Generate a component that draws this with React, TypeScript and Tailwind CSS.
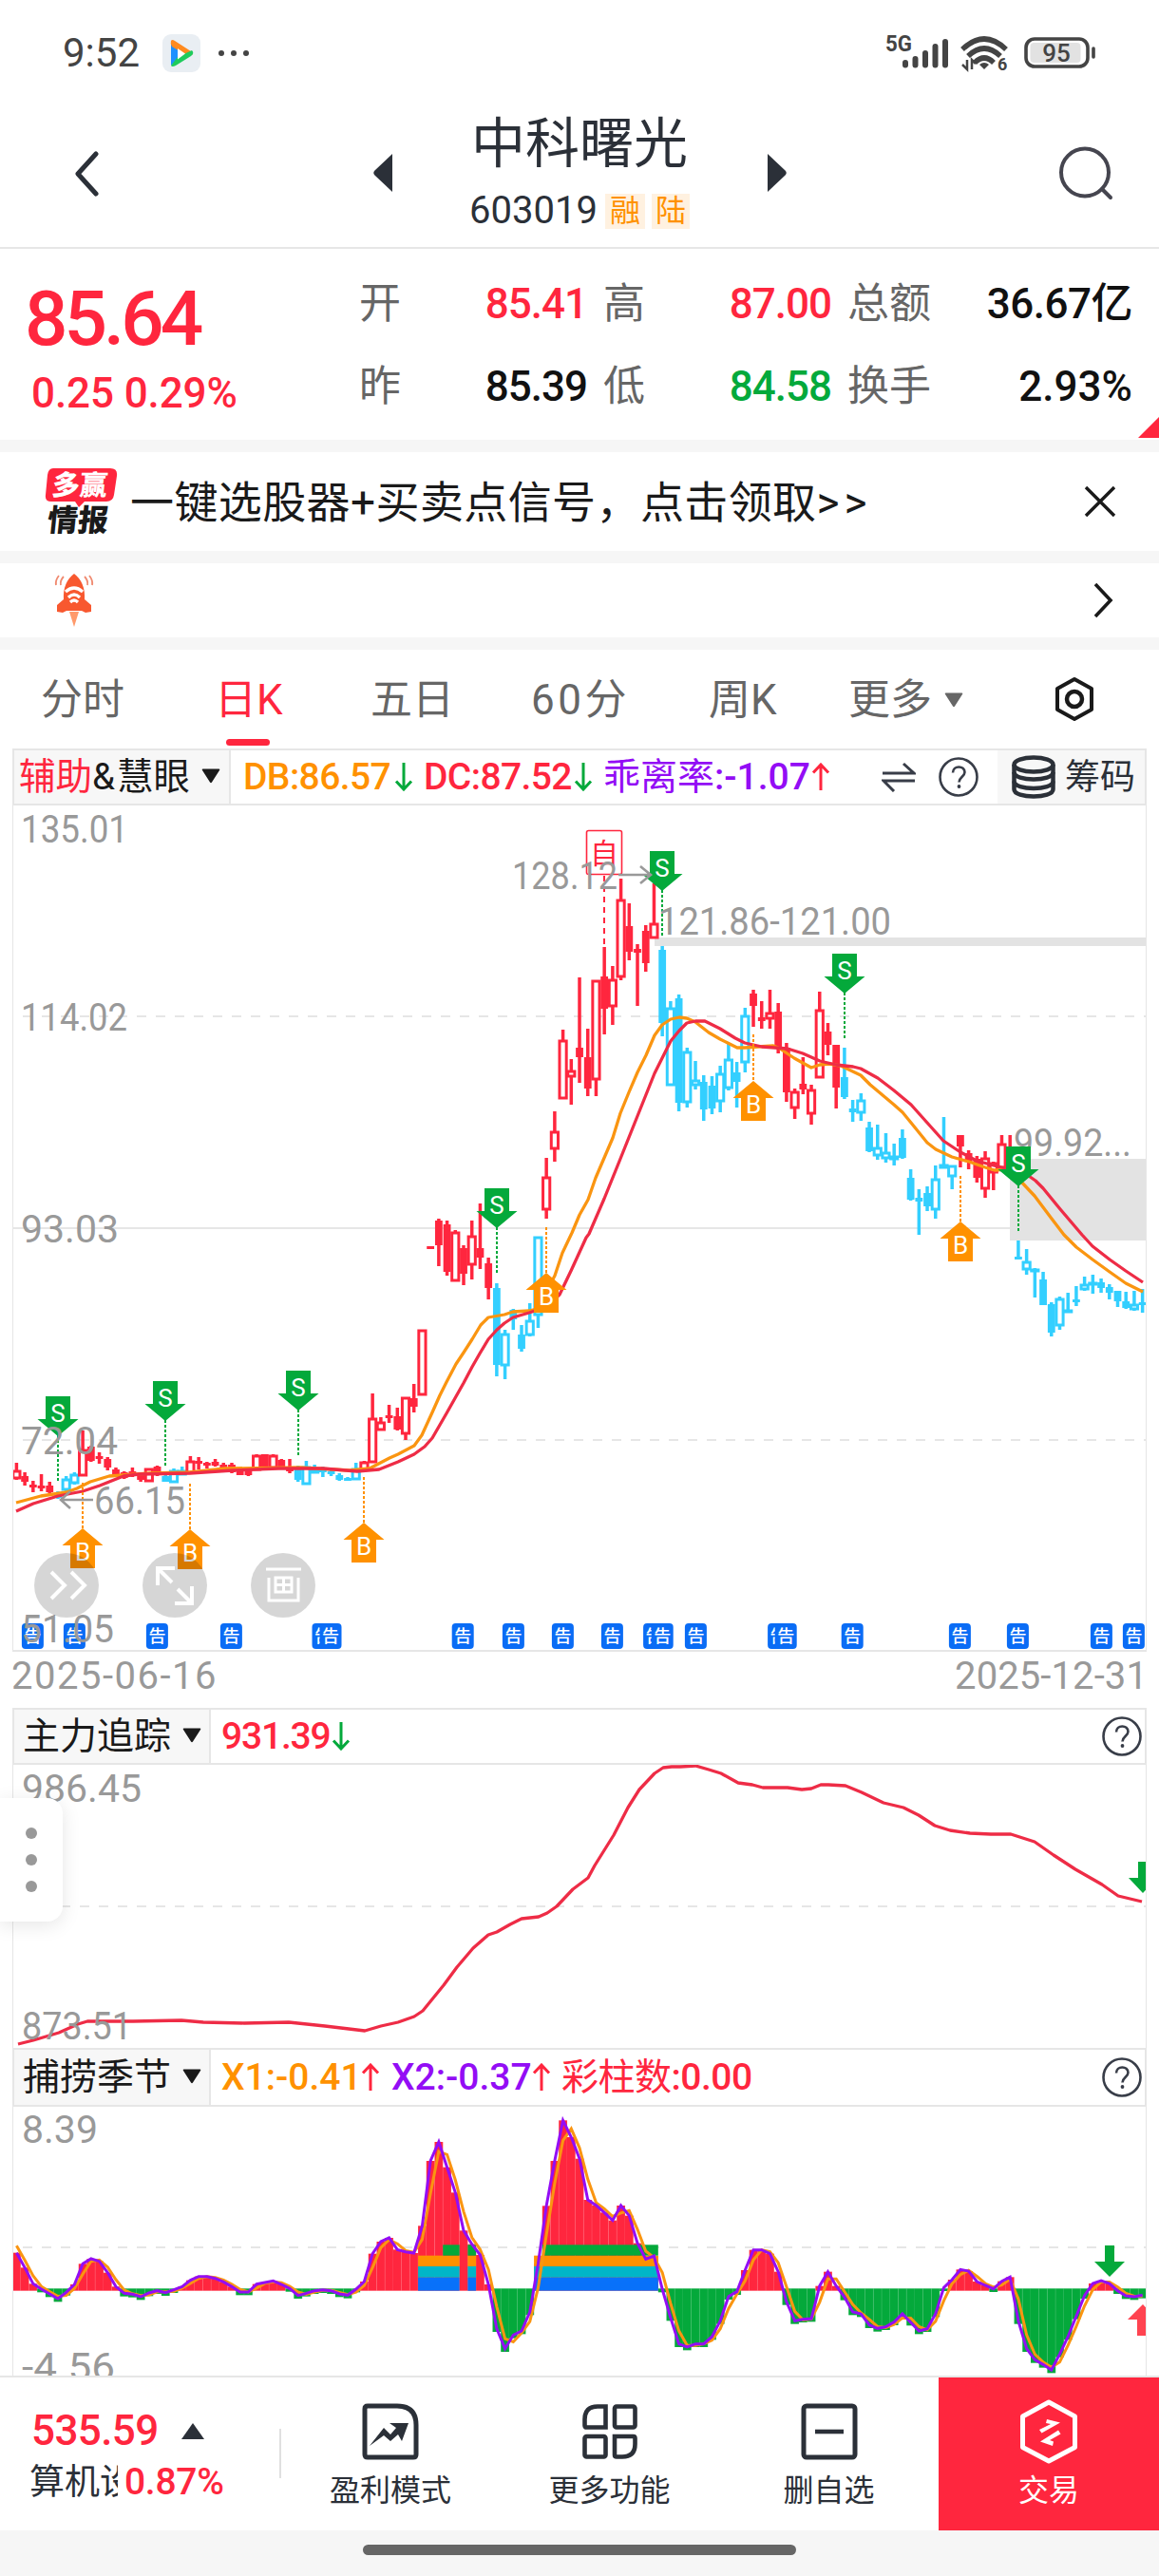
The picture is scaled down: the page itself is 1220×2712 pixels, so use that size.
import type { ReactNode } from "react";

type Kind = "R" | "r" | "B" | "b";
type Candle = [Kind, number, number, number, number];

const RED = "#ff263e";
const GREEN = "#04a93b";
const ORANGE = "#ff9100";
const CYAN = "#33cfff";
const PURPLE = "#930df5";

const STEP = 8.715;
const X0 = 17.4;
const cx = (i: number) => X0 + i * STEP;

// kind, high, body top, body bottom, low (upper case kinds are hollow)
const candles: Candle[] = [
  ["R", 1540, 1549, 1556, 1558], ["r", 1550, 1554, 1560, 1564], ["r", 1559, 1563, 1566, 1571], ["r", 1552, 1564, 1566, 1570],
  ["r", 1560, 1564, 1571, 1572], ["b", 1570, 1572, 1577, 1578], ["B", 1554, 1558, 1568, 1570], ["B", 1550, 1553, 1561, 1563],
  ["R", 1506, 1527, 1553, 1554], ["r", 1522, 1523, 1538, 1539], ["r", 1529, 1533, 1535, 1541], ["r", 1534, 1536, 1545, 1548],
  ["r", 1545, 1547, 1554, 1555], ["r", 1549, 1550, 1556, 1557], ["r", 1545, 1549, 1554, 1555], ["r", 1550, 1551, 1558, 1560],
  ["R", 1546, 1547, 1559, 1560], ["r", 1543, 1544, 1553, 1554], ["b", 1553, 1554, 1560, 1560], ["B", 1546, 1549, 1560, 1561],
  ["B", 1544, 1549, 1552, 1553], ["R", 1533, 1539, 1550, 1552], ["r", 1534, 1538, 1541, 1547], ["r", 1539, 1540, 1542, 1546],
  ["r", 1536, 1539, 1543, 1544], ["r", 1540, 1542, 1545, 1546], ["r", 1540, 1542, 1550, 1551], ["r", 1545, 1546, 1553, 1553],
  ["r", 1546, 1547, 1553, 1554], ["R", 1531, 1533, 1547, 1548], ["r", 1531, 1531, 1545, 1546], ["R", 1531, 1533, 1545, 1546],
  ["r", 1536, 1537, 1545, 1546], ["r", 1536, 1546, 1549, 1551], ["b", 1543, 1544, 1558, 1560], ["B", 1538, 1545, 1562, 1563],
  ["B", 1542, 1547, 1550, 1551], ["b", 1544, 1547, 1550, 1555], ["b", 1548, 1549, 1552, 1554], ["b", 1551, 1553, 1558, 1559],
  ["b", 1555, 1556, 1558, 1559], ["B", 1540, 1547, 1557, 1558], ["R", 1538, 1540, 1547, 1548], ["R", 1467, 1494, 1539, 1540],
  ["R", 1492, 1498, 1505, 1506], ["r", 1479, 1490, 1493, 1498], ["r", 1482, 1491, 1505, 1506], ["R", 1471, 1472, 1509, 1516],
  ["r", 1457, 1472, 1481, 1487], ["R", 1400, 1401, 1468, 1468], ["r", 1312, 1312, 1315, 1315], ["r", 1283, 1285, 1311, 1333],
  ["r", 1285, 1289, 1339, 1343], ["R", 1295, 1298, 1348, 1349], ["r", 1311, 1314, 1341, 1353], ["R", 1285, 1302, 1331, 1347],
  ["r", 1267, 1314, 1324, 1336], ["r", 1324, 1330, 1356, 1368], ["b", 1351, 1356, 1437, 1449], ["B", 1400, 1405, 1437, 1452],
  ["b", 1378, 1379, 1389, 1400], ["b", 1395, 1405, 1420, 1423], ["B", 1372, 1391, 1405, 1407], ["B", 1302, 1303, 1384, 1398],
  ["R", 1219, 1240, 1273, 1283], ["R", 1170, 1192, 1209, 1223], ["R", 1084, 1096, 1156, 1157], ["R", 1115, 1128, 1133, 1163],
  ["r", 1029, 1103, 1113, 1140], ["r", 1083, 1113, 1146, 1154], ["R", 1032, 1033, 1136, 1154], ["r", 997, 1028, 1062, 1089],
  ["R", 1017, 1032, 1059, 1079], ["R", 925, 948, 1028, 1032], ["r", 951, 975, 1002, 1011], ["r", 994, 999, 1003, 1059],
  ["r", 974, 980, 1014, 1023], ["R", 930, 973, 987, 988], ["b", 996, 1000, 1077, 1091], ["B", 1054, 1062, 1142, 1143],
  ["b", 1047, 1051, 1161, 1170], ["B", 1103, 1108, 1160, 1166], ["B", 1117, 1138, 1142, 1147], ["b", 1132, 1139, 1168, 1180],
  ["b", 1133, 1143, 1167, 1173], ["B", 1122, 1131, 1159, 1171], ["B", 1098, 1116, 1145, 1148], ["b", 1118, 1129, 1139, 1166],
  ["B", 1061, 1070, 1118, 1129], ["r", 1042, 1046, 1059, 1081], ["r", 1054, 1071, 1075, 1083], ["R", 1042, 1067, 1072, 1083],
  ["r", 1056, 1065, 1103, 1109], ["r", 1098, 1103, 1150, 1160], ["R", 1146, 1150, 1166, 1178], ["r", 1113, 1141, 1147, 1152],
  ["R", 1142, 1148, 1172, 1184], ["R", 1044, 1064, 1134, 1135], ["r", 1077, 1086, 1100, 1111], ["r", 1100, 1100, 1145, 1167],
  ["b", 1103, 1134, 1155, 1157], ["b", 1158, 1167, 1171, 1181], ["B", 1151, 1159, 1171, 1180], ["b", 1181, 1187, 1212, 1213],
  ["B", 1184, 1209, 1216, 1221], ["B", 1193, 1214, 1219, 1224], ["B", 1204, 1218, 1220, 1227], ["b", 1189, 1198, 1219, 1220],
  ["b", 1231, 1240, 1263, 1264], ["b", 1252, 1261, 1265, 1300], ["b", 1249, 1256, 1270, 1275], ["B", 1227, 1242, 1273, 1283],
  ["B", 1176, 1227, 1229, 1230], ["B", 1227, 1228, 1238, 1252], ["r", 1195, 1195, 1207, 1229], ["r", 1211, 1214, 1223, 1231],
  ["r", 1217, 1220, 1240, 1245], ["R", 1212, 1220, 1251, 1261], ["R", 1223, 1225, 1234, 1253], ["R", 1195, 1205, 1229, 1230],
  ["r", 1195, 1210, 1228, 1230], ["b", 1306, 1323, 1325, 1325], ["B", 1315, 1329, 1336, 1342], ["B", 1335, 1337, 1338, 1366],
  ["b", 1339, 1347, 1374, 1374], ["b", 1371, 1373, 1403, 1407], ["B", 1365, 1368, 1395, 1400], ["B", 1361, 1380, 1381, 1382],
  ["b", 1354, 1368, 1370, 1375], ["B", 1344, 1353, 1357, 1359], ["B", 1342, 1351, 1352, 1362], ["b", 1346, 1350, 1356, 1361],
  ["b", 1352, 1355, 1361, 1368], ["b", 1359, 1359, 1370, 1376], ["b", 1360, 1370, 1377, 1378], ["B", 1359, 1374, 1378, 1380],
  ["b", 1357, 1371, 1374, 1382],
];

const dbLine =
  "17,1582 43,1575 70,1571 81,1567 95,1560 115,1554 158,1551 200,1550 237,1546 316,1545 368,1548 389,1546 410,1535 419,1531 436,1522 444,1511 455,1487 463,1469 470,1455 480,1436 488,1424 497,1410 506,1395 514,1387 531,1384 540,1381 557,1380 565,1378 575,1360 584,1343 592,1319 602,1298 610,1279 619,1263 627,1240 636,1219 645,1198 653,1172 662,1150 671,1129 680,1111 689,1090 697,1079 706,1073 715,1071 723,1072 732,1076 746,1087 758,1094 766,1098 776,1103 784,1103 798,1102 814,1101 821,1104 836,1114 854,1124 863,1121 873,1120 885,1122 906,1132 916,1142 941,1163 950,1171 959,1182 976,1203 985,1210 1002,1218 1020,1223 1037,1229 1047,1232 1059,1231 1072,1241 1089,1259 1107,1283 1120,1300 1133,1313 1150,1326 1168,1339 1185,1351 1203,1360";

const dcLine =
  "17,1591 35,1583 61,1575 87,1570 105,1564 130,1554 146,1552 200,1551 245,1548 293,1546 340,1546 376,1549 399,1547 419,1539 436,1531 447,1523 455,1514 470,1488 488,1456 497,1439 505,1425 514,1410 523,1400 531,1393 540,1387 557,1382 563,1380 577,1374 589,1363 601,1338 617,1303 620,1299 636,1262 653,1220 671,1175 689,1130 706,1096 715,1085 723,1077 732,1075 742,1075 758,1083 774,1093 784,1098 802,1102 829,1104 845,1109 863,1117 880,1121 898,1123 906,1125 924,1135 941,1148 959,1163 976,1182 993,1201 1011,1213 1028,1222 1046,1227 1063,1231 1080,1236 1090,1243 1098,1251 1116,1273 1139,1300 1150,1312 1168,1326 1185,1338 1203,1350";

const forceLine =
  "19,2152 35,2148 62,2140 82,2131 92,2128 140,2128 191,2127 214,2129 257,2130 304,2129 342,2133 384,2138 401,2133 419,2129 436,2123 445,2117 467,2090 481,2071 498,2051 514,2037 523,2034 537,2026 549,2020 567,2018 576,2014 586,2007 603,1989 619,1977 626,1964 646,1932 661,1903 673,1884 689,1867 698,1861 707,1860 716,1860 732,1859 746,1863 759,1867 777,1877 792,1879 803,1882 829,1882 844,1884 854,1883 864,1879 872,1879 890,1880 907,1887 930,1898 951,1903 967,1911 984,1922 1000,1927 1021,1930 1043,1931 1064,1931 1089,1939 1109,1953 1132,1968 1160,1984 1177,1996 1202,2002";

// X2 levels, in thirds of a pixel
const x2 = [
  665, 712, 763, 780, 795, 810, 790, 765, 700, 684, 692, 728, 772, 793, 796, 804, 792, 785, 791, 782, 772, 752, 740, 740, 746,
  757, 772, 789, 789, 764, 759, 754, 765, 778, 800, 793, 785, 782, 785, 795, 799, 780, 756, 668, 630, 618, 655, 662, 666, 580,
  375, 315, 395, 475, 595, 638, 672, 765, 905, 968, 925, 912, 852, 700, 517, 375, 247, 300, 368, 498, 515, 538, 563, 516, 548,
  635, 685, 675, 780, 870, 953, 963, 953, 953, 930, 880, 803, 788, 720, 656, 656, 668, 725, 820, 880, 875, 873, 770, 725, 770,
  805, 852, 858, 893, 904, 899, 884, 858, 885, 912, 905, 858, 775, 750, 718, 723, 756, 768, 779, 755, 742, 880, 968, 1003, 1018,
  1035, 985, 930, 865, 800, 762, 753, 762, 785, 801, 804, 799,
];
const level = (v: number) => 2150 + v / 3;
const x2Points = x2.map((v, i) => `${cx(i)},${level(v)}`).join(" ");
const x1Points = x2.map((v, i) => `${cx(i)},${level(i === 0 ? 643 : (v + x2[i - 1]) / 2)}`).join(" ");

// colour columns: first index, last index, top, bottom, fill
const stacks: [number, number, number, number, string][] = [
  [49, 53, 743, 785, "#0871fa"], [49, 53, 708, 743, "#00b6c8"], [49, 53, 674, 708, ORANGE], [52, 53, 640, 674, GREEN],
  [55, 55, 743, 785, "#0871fa"], [55, 55, 708, 743, "#00b6c8"], [55, 55, 674, 708, ORANGE], [55, 55, 640, 674, GREEN],
  [63, 77, 743, 785, "#0871fa"], [63, 77, 708, 743, "#00b6c8"], [63, 77, 674, 708, ORANGE], [64, 77, 640, 674, GREEN],
];

// x, arrow top, end of dotted line
const sells = [[61, 1470, 1560], [174, 1454, 1544], [314, 1443, 1533], [523, 1251, 1341], [697, 896, 986], [889, 1004, 1094], [1072, 1207, 1297]];
// x, arrow tip, start of dotted line
const buys = [[87, 1609, 1561], [200, 1610, 1562], [383, 1603, 1555], [575, 1340, 1292], [793, 1138, 1089], [1011, 1286, 1238]];
const notices = [34.4, 78.4, 165.4, 243.4, 340, 348, 487.2, 540.4, 592.4, 644.4, 688.6, 697.2, 732.4, 819.6, 827.2, 897.2, 1010.4, 1071.4, 1159.4, 1193.4];

function Label({ x, y, w, children, size = 40 }: { x: number; y: number; w: number; children: string; size?: number }) {
  return (
    <text x={x} y={y} fontSize={size} fill="#999" textLength={w} lengthAdjust="spacingAndGlyphs">
      {children}
    </text>
  );
}

function CandleShape({ i, c }: { i: number; c: Candle }) {
  const [kind, high, top, bottom, low] = c;
  const x = cx(i);
  const hollow = kind === "R" || kind === "B";
  const color = kind.toUpperCase() === "R" ? RED : CYAN;
  return (
    <g>
      <path d={`M${x} ${high}V${top}M${x} ${bottom}V${low}`} stroke={color} strokeWidth={3.5} />
      {hollow ? (
        <rect x={x - 3.6} y={top} width={7.2} height={Math.max(1, bottom - top)} fill="#fff" stroke={color} strokeWidth={3} />
      ) : (
        <rect x={x - 3.9} y={top} width={7.8} height={Math.max(3, bottom - top)} fill={color} />
      )}
    </g>
  );
}

function PriceChart() {
  return (
    <svg viewBox="14 848 1192 890" className="block h-[890px] w-[1192px]">
      <path d="M14 1070H1206M14 1516H1206" stroke="#e6e6e6" strokeWidth={2} strokeDasharray="10 10" strokeDashoffset={-10} />
      <path d="M14 1293H1206" stroke="#e6e6e6" strokeWidth={2} />
      <rect x={689} y={987} width={517} height={9} fill="#e3e3e3" />
      <rect x={1063} y={1220} width={143} height={86} fill="#e3e3e3" />
      {candles.map((c, i) => <CandleShape key={i} i={i} c={c} />)}
      <polyline points={dbLine} fill="none" stroke="#fa9511" strokeWidth={3.3} strokeLinejoin="round" />
      <polyline points={dcLine} fill="none" stroke="#ee2c46" strokeWidth={3.3} strokeLinejoin="round" />
      <rect x={617.5} y={874.5} width={37} height={46} rx={2} fill="#fff" stroke={RED} strokeWidth={1.6} />
      <text x={636} y={909} fontSize={30} fill={RED} textAnchor="middle">自</text>
      <path d="M636 922V997" stroke={RED} strokeWidth={2} strokeDasharray="6 5" />
      <Label x={1067} y={1217} w={124}>99.92...</Label>
      {sells.map(([x, y, end]) => (
        <g key={x}>
          <path d={`M${x} ${y + 41}V${end}`} stroke={GREEN} strokeWidth={2} strokeDasharray="3 2" />
          <path d={`M${x - 13} ${y}h26v24h8.5L${x} ${y + 42}L${x - 21.5} ${y + 24}h8.5z`} fill={GREEN} />
          <text x={x} y={y + 27} fontSize={26} fill="#fff" textAnchor="middle">S</text>
        </g>
      ))}
      {buys.map(([x, y, start]) => (
        <g key={x}>
          <path d={`M${x} ${start}V${y + 2}`} stroke={ORANGE} strokeWidth={2} strokeDasharray="3 2" />
          <path d={`M${x - 13} ${y + 42}h26v-24h8.5L${x} ${y}L${x - 21.5} ${y + 18}h8.5z`} fill={ORANGE} />
          <text x={x} y={y + 34} fontSize={26} fill="#fff" textAnchor="middle">B</text>
        </g>
      ))}
      {notices.map((x) => (
        <g key={x}>
          <rect x={x - 11.5} y={1709} width={23} height={27} rx={4} fill="#0a6cf5" />
          <text x={x} y={1729} fontSize={18} fontWeight={500} fill="#fff" textAnchor="middle">告</text>
        </g>
      ))}
      <Label x={22} y={887} w={113}>135.01</Label>
      <Label x={22} y={1085} w={112}>114.02</Label>
      <Label x={22} y={1308} w={103}>93.03</Label>
      <Label x={22} y={1531} w={102}>72.04</Label>
      <Label x={22} y={1729} w={98}>51.05</Label>
      <Label x={539} y={936} w={111}>128.12</Label>
      <Label x={693} y={984} w={245}>121.86-121.00</Label>
      <Label x={99} y={1594} w={96}>66.15</Label>
      <path d="M651 921H684M674 912L685 921L674 930" fill="none" stroke="#999" strokeWidth={2.6} />
      <path d="M98 1579H65M74 1570L64 1579L74 1588" fill="none" stroke="#999" strokeWidth={2.6} />
      {[70, 184, 298].map((x) => <circle key={x} cx={x} cy={1669} r={34} fill="#000" fillOpacity={0.16} />)}
      <g fill="none" stroke="#fff" strokeWidth={4}>
        <path d="M54 1655L68 1669L54 1683M75 1655L89 1669L75 1683" />
        <path d="M184 1651H166V1669M166 1651L181 1666M184 1688H202V1670M202 1688L187 1673" />
        <path d="M280 1652H317M283 1661V1685H314V1661M290 1661H307V1676H290ZM298.500 1661V1676M290 1668.500H307" strokeWidth={3} />
      </g>
    </svg>
  );
}

function ForceChart() {
  return (
    <svg viewBox="14 1858 1192 298" className="block h-[298px] w-[1192px]">
      <path d="M14 2007H1206" stroke="#e6e6e6" strokeWidth={2} strokeDasharray="10 10" strokeDashoffset={-10} />
      <polyline points={forceLine} fill="none" stroke="#ee2c46" strokeWidth={3.3} strokeLinejoin="round" />
      <Label x={23} y={1897} w={126}>986.45</Label>
      <Label x={23} y={2147} w={116}>873.51</Label>
      <path d="M1198 1960h10v17h10l-15 16l-15-16h10z" fill={GREEN} />
    </svg>
  );
}

function SeasonChart() {
  return (
    <svg viewBox="14 2218 1192 283" className="block h-[283px] w-[1192px]">
      <path d="M14 2366H1206" stroke="#e6e6e6" strokeWidth={2} strokeDasharray="10 10" strokeDashoffset={-10} />
      {x2.map((v, i) => {
        const up = v < 774;
        const top = up ? level(v) : level(778);
        const bottom = up ? level(785) : level(Math.max(786, v + 10));
        return (
          <g key={i}>
            <rect x={cx(i) - 4.36} y={top} width={8.8} height={bottom - top} fill={up ? RED : GREEN} />
            <path d={`M${cx(i) + 4.36} ${top}V${bottom}`} stroke="#fff" strokeOpacity={0.2} strokeWidth={0.8} />
          </g>
        );
      })}
      {stacks.map(([from, to, top, bottom, fill], k) => (
        <rect key={k} x={cx(from) - 4.36} y={level(top)} width={(to - from + 1) * STEP} height={(bottom - top) / 3} fill={fill} />
      ))}
      <polyline points={x1Points} fill="none" stroke="#fa9511" strokeWidth={3} />
      <polyline points={x2Points} fill="none" stroke={PURPLE} strokeWidth={3} />
      <Label x={23} y={2256} w={80}>8.39</Label>
      <Label x={23} y={2506} w={98}>-4.56</Label>
      <path d="M1163 2364h10v17h11l-16 16l-16-16h11z" fill={GREEN} />
      <path d="M1197 2459h12v-17h9l-15-16l-16 16h10z" fill="#ff4350" />
    </svg>
  );
}

function Help() {
  return (
    <svg viewBox="0 0 44 44" className="h-[44px] w-[44px] shrink-0">
      <circle cx={22} cy={22} r={19.5} fill="none" stroke="#383d48" strokeWidth={2.6} />
      <path d="M16 17.500C16 9.500 28.500 9.500 28.500 17C28.500 21.500 22.500 22 22.500 27.500" fill="none" stroke="#383d48" strokeWidth={2.6} />
      <circle cx={22.5} cy={32} r={1.9} fill="#383d48" />
    </svg>
  );
}

function Arrow({ up, className = "" }: { up?: boolean; className?: string }) {
  return (
    <svg viewBox="0 0 20 30" className={`h-[30px] w-[20px] shrink-0 ${className}`}>
      <path
        d={up ? "M10 29V2M2 10.500L10 2L18 10.500" : "M10 0V27M2 19.500L10 28L18 19.500"}
        fill="none"
        stroke={up ? RED : GREEN}
        strokeWidth={3}
      />
    </svg>
  );
}

function Caret({ className = "" }: { className?: string }) {
  return (
    <svg viewBox="0 0 20 16" className={`h-[16px] w-[20px] shrink-0 ${className}`}>
      <path d="M1.500 0.500H18.500Q20 0.500 19 2L11 14.500Q10 16 9 14.500L1 2Q0 0.500 1.500 0.500Z" fill="currentColor" />
    </svg>
  );
}

function PanelTitle({ title }: { title: string }) {
  return (
    <div className="flex w-[207px] shrink-0 items-center border-r-2 border-[#e6e6e6] bg-[#f7f7f7] pl-[9px] text-[39px] text-[#1a1a1a]">
      <span className="w-[168px]">{title}</span>
      <Caret className="-mt-[3px]" />
    </div>
  );
}

function Quote({ label, value, className }: { label: string; value: string; className: string }) {
  return (
    <div className={`flex items-center justify-between ${className}`}>
      <span className="text-[44px] font-normal tracking-normal text-[#666]">{label}</span>
      <span className="text-[44px]">{value}</span>
    </div>
  );
}

function StatusBar() {
  return (
    <div className="flex h-[112px] items-center pl-[66px] text-[#444]">
      <span className="w-[105px] text-[42px]">9:52</span>
      <svg viewBox="0 0 40 40" className="h-[40px] w-[40px]">
        <rect width={40} height={40} rx={9} fill="#e9eef3" />
        <path d="M9 8v25l7-6V14z" fill="#1e90ff" />
        <path d="M9 7Q10 5 13 7L30 18Q33 20 31 22L25 22L10 13Q8 10 9 7z" fill="#ff8a1e" />
        <path d="M9 33L16 24L31 17Q34 20 30 23L14 33Q10 35 9 33z" fill="#1ecb5c" />
        <path d="M16 15l8 5.500l-8 6z" fill="#fff" />
      </svg>
      <div className="ml-[19px] flex gap-[7px]">
        <i className="h-[6px] w-[6px] rounded-full bg-[#444]" />
        <i className="h-[6px] w-[6px] rounded-full bg-[#444]" />
        <i className="h-[6px] w-[6px] rounded-full bg-[#444]" />
      </div>
      <svg viewBox="930 34 224 44" className="mr-[67px] ml-auto h-[44px] w-[224px]">
        <text x={933} y={54} fontSize={23} fontWeight={700} fill="#444" textLength={28} lengthAdjust="spacingAndGlyphs">5G</text>
        <g stroke="#444" strokeWidth={6} strokeLinecap="round">
          <path d="M954 66V68.500M964.500 62V68.500M975 56V68.500M985.500 49V68.500M996 44V68.500" />
        </g>
        <g fill="none" stroke="#444" strokeWidth={5.5}>
          <path d="M1014 52Q1037 30 1060 52" />
          <path d="M1020 59Q1037 43 1054 59" />
          <path d="M1027 66Q1037 56 1047 66" />
        </g>
        <path d="M1037 73l-5-5q5-4 10 0z" fill="#444" />
        <path d="M1019 63V73L1014 68M1024 73V63L1028 67" fill="none" stroke="#444" strokeWidth={2.5} />
        <text x={1051} y={74} fontSize={18} fontWeight={700} fill="#444">6</text>
        <rect x={1081} y={41} width={65} height={29} rx={9} fill="#fff" stroke="#444" strokeWidth={3.6} />
        <rect x={1085.5} y={45} width={53} height={21} rx={4} fill="#e2e2e2" />
        <path d="M1152 51V60" stroke="#444" strokeWidth={3.6} strokeLinecap="round" />
        <text x={1113} y={65} fontSize={26} fontWeight={500} fill="#444" textAnchor="middle">95</text>
      </svg>
    </div>
  );
}

function TabItem({ className, children }: { className: string; children: ReactNode }) {
  return <div className={`relative flex h-full items-center pt-[2px] ${className}`}>{children}</div>;
}

export default function App() {
  return (
    <div className="flex h-[2712px] w-[1220px] flex-col overflow-hidden bg-white font-['Roboto','Noto_Sans_CJK_SC',sans-serif] leading-none whitespace-nowrap">
      <StatusBar />

      <header className="flex h-[150px] items-start border-b-2 border-[#e6e6e6]">
        <svg viewBox="0 0 26 48" className="mt-[47px] ml-[77px] h-[48px] w-[28px]">
          <path d="M23 3L4 24L23 45" fill="none" stroke="#2b3038" strokeWidth={5} strokeLinecap="round" strokeLinejoin="round" />
        </svg>
        <svg viewBox="0 0 20 40" className="mt-[50px] ml-[288px] h-[40px] w-[20px]">
          <path d="M20 0V40L1.500 22.500Q-1 20 1.500 17.500z" fill="#2b3038" />
        </svg>
        <div className="ml-[76px] flex w-[242px] flex-col items-center text-[#2b3038]">
          <h1 className="mt-[11px] text-[57px]">中科曙光</h1>
          <div className="mt-[22px] flex items-center gap-[7px]">
            <span className="mr-[1px] text-[40px]">603019</span>
            <span className="flex h-[37px] w-[42px] items-center justify-center bg-[#fff1e0] text-[32px] text-[#ff9100]">融</span>
            <span className="flex h-[37px] w-[40px] items-center justify-center bg-[#fff1e0] text-[32px] text-[#ff9100]">陆</span>
          </div>
        </div>
        <svg viewBox="0 0 20 40" className="mt-[50px] ml-[77px] h-[40px] w-[20px]">
          <path d="M0 0V40L18.500 22.500Q21 20 18.500 17.500z" fill="#2b3038" />
        </svg>
        <svg viewBox="0 0 60 60" className="mt-[41px] ml-[286px] h-[60px] w-[60px]">
          <circle cx={28} cy={28.5} r={25} fill="none" stroke="#45454f" strokeWidth={4} />
          <path d="M46 46L55 55" stroke="#45454f" strokeWidth={4} strokeLinecap="round" />
        </svg>
      </header>

      <section className="relative flex h-[201px]">
        <div className="w-[378px] text-[#ff263e]">
          <div className="mt-[34px] ml-[26px] text-[80px] font-medium tracking-[-4px]">85.64</div>
          <div className="mt-[16px] ml-[33px] text-[44px] font-medium tracking-[-0.1px]">0.25 0.29%</div>
        </div>
        <div className="flex flex-col gap-[43px] pt-[36px] font-medium">
          <div className="flex gap-[17px]">
            <Quote label="开" value="85.41" className="w-[240px] tracking-[-1px] text-[#ff263e]" />
            <Quote label="高" value="87.00" className="w-[240px] tracking-[-1px] text-[#ff263e]" />
            <Quote label="总额" value="36.67亿" className="w-[300px] tracking-[-0.5px] text-[#111]" />
          </div>
          <div className="flex gap-[17px]">
            <Quote label="昨" value="85.39" className="w-[240px] tracking-[-1px] text-[#111]" />
            <Quote label="低" value="84.58" className="w-[240px] tracking-[-1px] text-[#04a93b]" />
            <Quote label="换手" value="2.93%" className="w-[300px] text-[#111]" />
          </div>
        </div>
        <svg viewBox="0 0 22 22" className="absolute right-0 bottom-[2px] h-[22px] w-[22px]">
          <path d="M22 0V22H0z" fill={RED} />
        </svg>
      </section>

      <div className="h-[13px] bg-[#f6f6f6]" />

      <section className="flex h-[104px] items-center">
        <svg viewBox="0 0 80 72" className="ml-[46px] h-[72px] w-[80px] overflow-visible">
          <path d="M10 1H70Q78 1 77 9L74 29Q73 36 66 36H43L37 42L33 36H8Q1 36 2 29L4 8Q5 1 10 1z" fill={RED} />
          <text x={11} y={29} fontSize={29} fontWeight={900} fill="#fff" transform="skewX(-6)">多赢</text>
          <text x={10} y={67} fontSize={32} fontWeight={900} fill="#1a1a1a" transform="skewX(-6)">情报</text>
        </svg>
        <span className="mt-[2px] ml-[11px] text-[46px] tracking-[0.4px] text-[#1a1a1a]">
          一键选股器+买卖点信号，点击领取<span className="tracking-[5px]">&gt;&gt;</span>
        </span>
        <svg viewBox="0 0 34 34" className="mr-[45px] ml-auto h-[34px] w-[34px]">
          <path d="M2 2L32 32M32 2L2 32" stroke="#1a1a1a" strokeWidth={3.4} />
        </svg>
      </section>

      <div className="h-[13px] bg-[#f6f6f6]" />

      <section className="flex h-[78px] items-center">
        <svg viewBox="0 0 46 58" className="ml-[55px] h-[58px] w-[46px]">
          <path d="M18 41L23 57L28 41z" fill="#ff9a6b" />
          <path d="M23 1Q35 10 34 28L41 34V41L35 42L31 40L15 40L11 42L5 41V34L12 28Q11 10 23 1z" fill="#f8582f" />
          <path d="M14 20Q23 12 32 20M17 26Q23 20 29 26M19 31Q23 27 27 31" fill="none" stroke="#fff" strokeWidth={3.2} />
          <path d="M7 3Q3 8 4 13M12 4Q8 8 9 13M39 3Q43 8 42 13M34 4Q38 8 37 13" fill="none" stroke="#f08a70" strokeWidth={1.8} />
        </svg>
        <svg viewBox="0 0 22 38" className="mr-[48px] ml-auto h-[38px] w-[22px]">
          <path d="M3 2L19 19L3 36" fill="none" stroke="#1a1a1a" strokeWidth={3.6} />
        </svg>
      </section>

      <div className="h-[13px] bg-[#f6f6f6]" />

      <nav className="flex h-[104px] items-center text-[44px] text-[#666]">
        <TabItem className="ml-[43px] w-[183px]">分时</TabItem>
        <TabItem className="w-[164px] text-[#ff263e]">
          日K
          <span className="absolute bottom-[3px] left-[12px] h-[7px] w-[46px] rounded-full bg-[#ff263e]" />
        </TabItem>
        <TabItem className="w-[169px]">五日</TabItem>
        <TabItem className="w-[187px]">
          <span className="tracking-[3.5px]">60</span>分
        </TabItem>
        <TabItem className="w-[147px]">周K</TabItem>
        <TabItem className="w-[216px]">
          更多
          <Caret className="ml-[13px]" />
        </TabItem>
        <svg viewBox="0 0 44 48" className="h-[48px] w-[44px]">
          <path d="M22 3L40 13V35L22 45L4 35V13z" fill="none" stroke="#1a1a1a" strokeWidth={4} strokeLinejoin="round" />
          <circle cx={22} cy={24} r={8} fill="none" stroke="#1a1a1a" strokeWidth={4.5} />
        </svg>
      </nav>

      <div className="mx-[13px] flex h-[60px] border-2 border-[#e6e6e6] text-[39px]">
        <div className="flex w-[228px] shrink-0 items-center border-r-2 border-[#e6e6e6] bg-[#f7f7f7] pl-[5px] text-[38.5px] text-[#1a1a1a]">
          <span className="w-[192px]">
            <span className="text-[#ff263e]">辅助</span>
            <span className="tracking-[2px]">&amp;</span>慧眼
          </span>
          <Caret className="-mt-[3px]" />
        </div>
        <div className="flex items-center pl-[13px] font-medium">
          <span className="w-[159px] tracking-[-0.6px] text-[#ff9100]">DB:86.57</span>
          <Arrow className="mr-[11px]" />
          <span className="w-[158px] tracking-[-0.6px] text-[#ff263e]">DC:87.52</span>
          <Arrow className="mr-[11px]" />
          <span className="w-[219px] text-[#930df5]"><span className="font-normal">乖离率</span>:-1.07</span>
          <Arrow up />
        </div>
        <div className="ml-auto flex items-center">
          <svg viewBox="0 0 36 32" className="h-[32px] w-[36px]">
            <path d="M1 12H34L23 2M35 20H2L13 31" fill="none" stroke="#383d48" strokeWidth={3} />
          </svg>
          <div className="mr-[19px] ml-[23px]"><Help /></div>
          <div className="flex h-full w-[155px] items-center gap-[10px] bg-[#f7f7f7] pl-[15px] text-[37px] text-[#2b3038]">
            <svg viewBox="0 0 46 46" className="h-[46px] w-[46px]">
              <g fill="none" stroke="#2b3038" strokeWidth={4.5}>
                <ellipse cx={23} cy={10} rx={20.5} ry={7.5} />
                <path d="M2.500 10V36C2.500 46 43.500 46 43.500 36V10" />
                <path d="M2.500 18C2.500 28 43.500 28 43.500 18M2.500 27.500C2.500 37.500 43.500 37.500 43.500 27.500" />
              </g>
            </svg>
            筹码
          </div>
        </div>
      </div>

      <div className="mx-[13px] h-[891px] overflow-hidden border-x border-b-2 border-[#e6e6e6]">
        <PriceChart />
      </div>

      <div className="flex h-[59px] items-center justify-between px-[12px] pb-[8px] text-[40px] text-[#999]">
        <span className="tracking-[1.5px]">2025-06-16</span>
        <span className="tracking-[0.1px]">2025-12-31</span>
      </div>

      <div className="relative mx-[13px] flex h-[60px] border-2 border-[#e6e6e6]">
        <PanelTitle title="主力追踪" />
        <div className="flex items-center pl-[11px] text-[39px] font-medium">
          <span className="w-[116px] tracking-[-1.2px] text-[#ff263e]">931.39</span>
          <Arrow />
        </div>
        <div className="mr-[2px] ml-auto flex items-center"><Help /></div>
      </div>

      <div className="relative mx-[13px] h-[298px] border-x border-[#e6e6e6]">
        <ForceChart />
        <div className="absolute top-[35px] -left-[14px] flex h-[130px] w-[66px] flex-col items-center justify-center gap-[16px] rounded-r-[16px] bg-white shadow-[0_4px_20px_rgba(0,0,0,0.1)]">
          <i className="h-[12px] w-[12px] rounded-full bg-[#999]" />
          <i className="h-[12px] w-[12px] rounded-full bg-[#999]" />
          <i className="h-[12px] w-[12px] rounded-full bg-[#999]" />
        </div>
      </div>

      <div className="mx-[13px] flex h-[62px] border-2 border-[#e6e6e6]">
        <PanelTitle title="捕捞季节" />
        <div className="flex items-center pl-[11px] text-[39px] font-medium">
          <span className="w-[147px] text-[#ff9100]">X1:-0.41</span>
          <Arrow up className="mr-[12px]" />
          <span className="w-[148px] text-[#930df5]">X2:-0.37</span>
          <Arrow up className="mr-[11px]" />
          <span className="tracking-[-0.5px] text-[#ff263e]"><span className="font-normal">彩柱数</span>:0.00</span>
        </div>
        <div className="mr-[2px] ml-auto flex items-center"><Help /></div>
      </div>

      <div className="mx-[13px] h-[283px] border-x border-[#e6e6e6]">
        <SeasonChart />
      </div>

      <footer className="flex h-[163px] border-t-2 border-[#e6e6e6] text-[32px] text-[#2b3038]">
        <div className="w-[294px] pt-[34px] pl-[31px]">
          <div className="flex items-center pl-[2px] text-[44px] font-medium text-[#ff263e]">
            <span className="w-[158px] tracking-[-0.6px]">535.59</span>
            <svg viewBox="0 0 24 17" className="h-[17px] w-[24px]">
              <path d="M12 0L24 17H0z" fill="#2b3038" />
            </svg>
          </div>
          <div className="mt-[11px] flex items-center text-[37px]">
            <span className="w-[93px] shrink-0 overflow-hidden py-[3px]">算机设</span>
            <span className="ml-[7px] text-[39px] font-medium tracking-[-0.3px] text-[#ff263e]">0.87%</span>
          </div>
        </div>
        <div className="mt-[54px] h-[52px] w-[2px] bg-[#e0e0e0]" />
        <div className="flex w-[230px] flex-col items-center pt-[27px]">
          <svg viewBox="0 0 60 60" className="h-[60px] w-[60px]">
            <path d="M3 6Q3 3 6 3H37Q57 3 57 23V54Q57 57 54 57H6Q3 57 3 54z" fill="none" stroke="#2b3038" strokeWidth={5} />
            <path d="M8 45L23 26L30 33L36 26L29 21H49L42 40L38 33L30 40L23 34z" fill="#2b3038" />
          </svg>
          <span className="mt-[16px]">盈利模式</span>
        </div>
        <div className="flex w-[231px] flex-col items-center pt-[27px]">
          <svg viewBox="0 0 60 60" className="h-[60px] w-[60px]">
            <g fill="none" stroke="#2b3038" strokeWidth={4.6}>
              <path d="M17 3.500H25.500V25.500H5.500Q3.500 25.500 3.500 23.500V17Q3.500 3.500 17 3.500z" />
              <rect x={35} y={3.5} width={21.5} height={22} rx={2} />
              <rect x={3.5} y={35} width={22} height={21.5} rx={2} />
              <path d="M35 35H54.500Q56.500 35 56.500 37V43Q56.500 56.500 43 56.500H37Q35 56.500 35 54.500z" />
            </g>
          </svg>
          <span className="mt-[16px]">更多功能</span>
        </div>
        <div className="flex w-[231px] flex-col items-center pt-[27px]">
          <svg viewBox="0 0 60 60" className="h-[60px] w-[60px]">
            <rect x={3} y={3} width={54} height={54} rx={3} fill="none" stroke="#2b3038" strokeWidth={5} />
            <path d="M15 30H45" stroke="#2b3038" strokeWidth={4.6} />
          </svg>
          <span className="mt-[16px]">删自选</span>
        </div>
        <div className="flex flex-1 flex-col items-center bg-[#ff263e] pt-[22px] text-white">
          <svg viewBox="0 0 64 70" className="h-[70px] w-[64px]">
            <path d="M32 4L59.500 19V51.500L32 66L4.500 51.500V19z" fill="none" stroke="#fff" strokeWidth={5} strokeLinejoin="round" />
            <path d="M30 22L44 25.500L24.500 36.500L22 33L34 27L29 26z" fill="#fff" />
            <path d="M23 45.500L42 33.500L44.500 37.500L33 44L37 45.500L36 50z" fill="#fff" />
          </svg>
          <span className="mt-[11px]">交易</span>
        </div>
      </footer>

      <div className="flex h-[48px] justify-center bg-[#f6f6f6] pt-[15px]">
        <div className="h-[11px] w-[456px] rounded-full bg-[#666]" />
      </div>
    </div>
  );
}
